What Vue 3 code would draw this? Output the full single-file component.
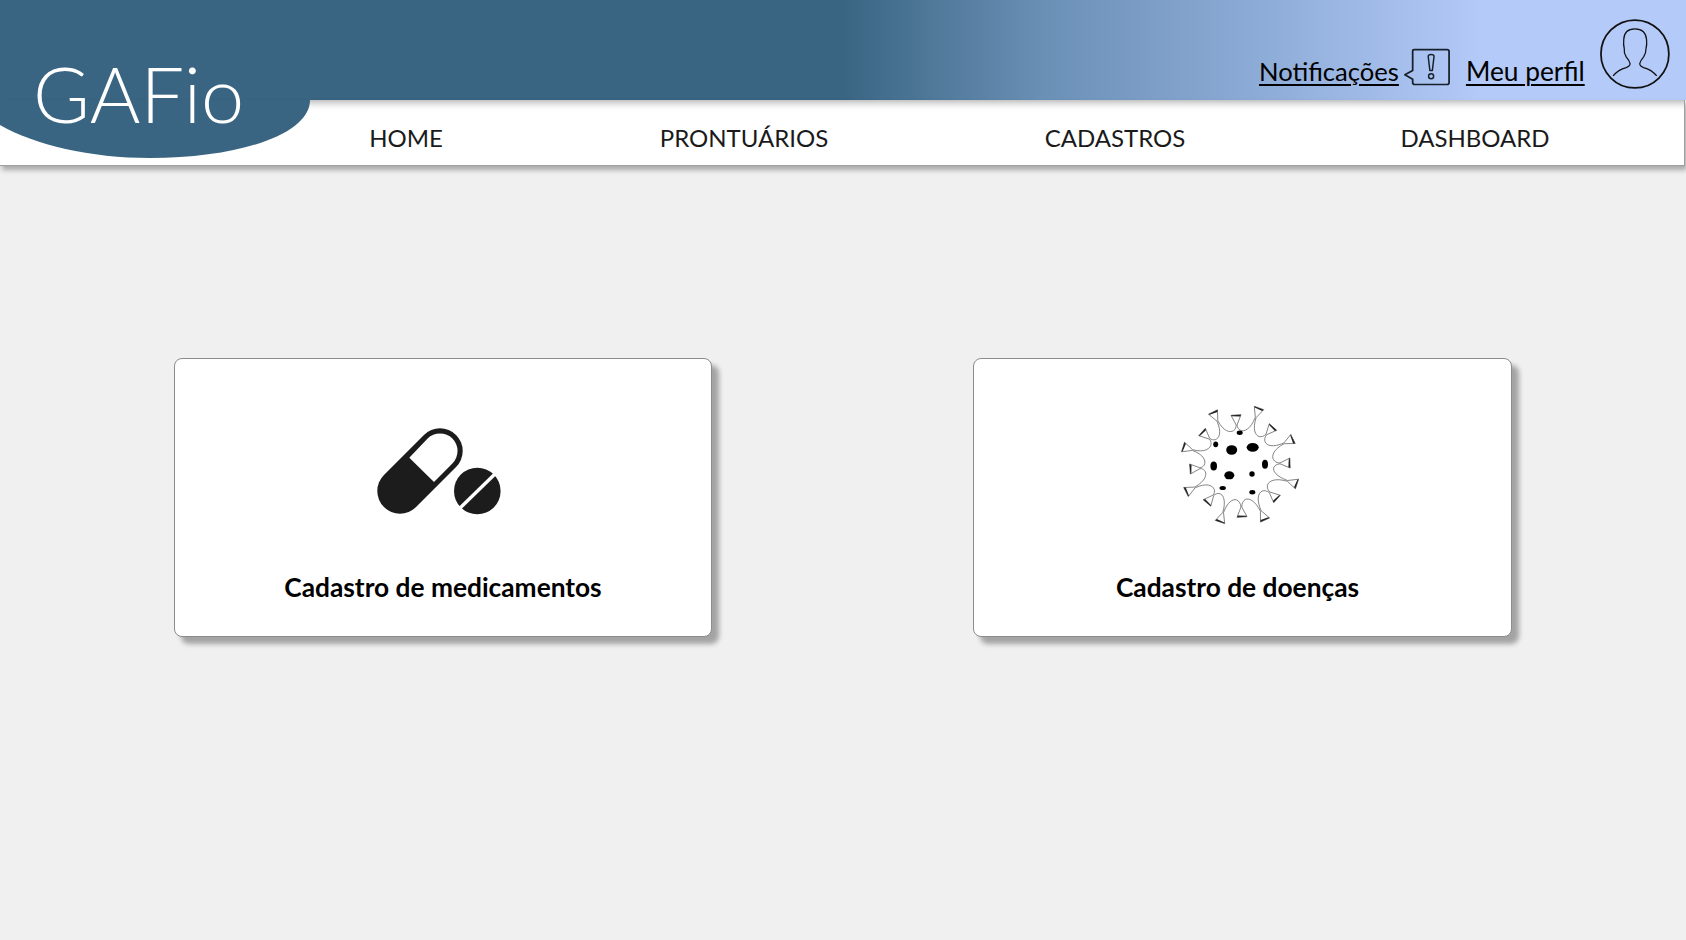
<template>
  <div class="page">
    <header class="header">
      <div class="topbar">
        <a class="toplink">Notificações</a>
        <svg class="alertIcon" width="50" height="42" viewBox="0 0 50 42">
          <path d="M11 3.5 Q11 2 12.5 2 H46.5 Q48.5 2 48.5 4 V36 Q48.5 38 46.5 38 H13 Q11 38 11 36 V32.5 L3 28 L11 23.5 Z" fill="none" stroke="#16202a" stroke-width="1.8" stroke-linejoin="round" />
          <path d="M27 9 Q27 7 30 7 Q33 7 33 9 L31.3 23.5 H28.7 Z" fill="none" stroke="#16202a" stroke-width="1.5" stroke-linejoin="round" />
          <circle cx="30" cy="29.5" r="2.6" fill="none" stroke="#16202a" stroke-width="1.5" />
        </svg>
        <a class="toplink profile">Meu perfil</a>
        <svg class="avatar" width="74" height="74" viewBox="0 0 74 74">
          <circle cx="37" cy="37" r="35" fill="none" stroke="#111" stroke-width="1.8" />
          <path d="M14.5 59.5 Q20 53 28 51 Q32 49.5 32 47 Q31.5 44 28 40 Q25.5 36 26 31 Q25 28 25.5 22 Q26 11 37 11 Q48 11 49 22 Q49.5 28 48.5 31 Q48.5 36 46 40 Q42.5 44 42 47 Q42 49.5 46 51 Q54 53 59.5 59.5" fill="none" stroke="#111" stroke-width="1.3" />
        </svg>
      </div>
      <nav class="nav">
        <a v-for="item in menu" :key="item">{{ item }}</a>
      </nav>
      <div class="logo">
        <svg class="logoShape" width="312" height="60" viewBox="0 0 312 60">
          <path d="M0 0 H310 C310 34 240 58 150 58 C90 58 35 45 0 25 Z" fill="#396582" />
        </svg>
        <span class="logoText">GAFio</span>
      </div>
    </header>

    <main class="cards">
      <section class="card">
        <svg class="cardIcon pillIcon" width="170" height="120" viewBox="0 0 170 120">
          <line x1="50" y1="80" x2="90" y2="40" stroke="#1c1c1c" stroke-width="45.4" stroke-linecap="round" />
          <path d="M59.3 46.7 L77.6 27.6 A17.5 17.5 0 0 1 102.4 52.4 L84 71 Z" fill="#fff" />
          <circle cx="127.3" cy="80" r="23.3" fill="#1c1c1c" />
          <line x1="108" y1="99" x2="147" y2="61" stroke="#fff" stroke-width="3.4" />
        </svg>
        <h2>Cadastro de medicamentos</h2>
      </section>
      <section class="card virusCard">
        <svg class="cardIcon" width="150" height="140" viewBox="0 0 150 140">
          <path :d="virusOutline" fill="none" stroke="#666" stroke-width="0.8" stroke-linejoin="round" />
          <path v-for="(h, i) in virusHeads" :key="i" :d="h" fill="#222" />
          <ellipse v-for="(b, i) in virusDots" :key="'d' + i" :cx="b[0]" :cy="b[1]" :rx="b[2]" :ry="b[3]" fill="#000" />
        </svg>
        <h2>Cadastro de doenças</h2>
      </section>
    </main>
  </div>
</template>

<script setup>
const menu = ['HOME', 'PRONTUÁRIOS', 'CADASTROS', 'DASHBOARD']

// spike tips of the virus, read off the picture
const tips = [
  [48, 17], [71, 20], [94, 13], [108, 32], [128, 44], [125, 68], [132, 89], [112, 104],
  [100, 125], [77, 122], [55, 127], [42, 108], [21, 97], [25, 74], [18, 52], [37, 37]
]
const cx = 74
const cy = 70

const at = (p, r, side) => {
  const dx = p[0] - cx
  const dy = p[1] - cy
  const len = Math.hypot(dx, dy)
  const ux = dx / len
  const uy = dy / len
  return [p[0] - ux * r - uy * side, p[1] - uy * r + ux * side]
}
const pt = (p) => p[0].toFixed(1) + ' ' + p[1].toFixed(1)

// depth of the U between two spikes, from how far out the spike reaches
const reach = (p) => Math.max(Math.hypot(p[0] - cx, p[1] - cy) - 38, 10) + 6

let outline = ''
tips.forEach((tip, i) => {
  const next = tips[(i + 1) % tips.length]
  const neck = at(tip, 10, 0.4)
  const nextNeck = at(next, 10, -0.4)
  if (i === 0) outline += 'M' + pt(at(tip, 10, -0.4))
  outline += ' L' + pt(at(tip, 0, -5)) + ' L' + pt(at(tip, 0, 5)) + ' L' + pt(neck)
  outline += ' C' + pt(at(tip, reach(tip), 1)) + ' ' + pt(at(next, reach(next), -1)) + ' ' + pt(nextNeck)
})
const virusOutline = outline + ' Z'

const virusHeads = tips.map((tip) => {
  return 'M' + pt(at(tip, 0, -5)) + ' L' + pt(at(tip, 0, 5)) + ' L' + pt(at(tip, 1.8, 4)) + ' L' + pt(at(tip, 1, -4.2)) + ' Z'
})

const virusDots = [
  [66.7, 55, 5.5, 4.8], [87.7, 52.3, 6, 4.4], [74.7, 37.7, 3, 2.2], [50.7, 49.3, 2.5, 2.9],
  [48.7, 71, 3.3, 4.5], [64.3, 80.3, 5, 4], [100, 69.3, 3, 4.5], [87, 79, 2.7, 2.7],
  [57.7, 93, 3.2, 2.1], [87.3, 97.3, 3, 2.2]
]
</script>

<style>
html,
body {
  margin: 0;
  background: #f0f0f0;
}
</style>

<style scoped>
.page {
  width: 1686px;
  height: 940px;
  overflow: hidden;
  background: #f0f0f0;
  font-family: Lato, "Liberation Sans", sans-serif;
  color: #000;
}

.header {
  position: relative;
}

.topbar {
  height: 100px;
  box-sizing: border-box;
  padding: 0 15px 0 1259px;
  display: flex;
  align-items: flex-end;
  background: linear-gradient(90deg, #396582 0%, #396582 50%, #6b90b6 62%, #8eacd8 75%, #b4caf9 88%, #b4caf9 100%);
}

.toplink {
  color: #000;
  font-size: 25.6px;
  line-height: 30px;
  text-decoration: underline;
  text-decoration-thickness: 1.5px;
  text-underline-offset: 3px;
  margin-bottom: 14px;
  width: 140px;
  white-space: nowrap;
}

.alertIcon {
  margin: 0 0 11px 3.5px;
}

.toplink.profile {
  margin-left: 15px;
  width: 119px;
  font-size: 26.3px;
}

.avatar {
  margin: 0 0 9px 14.5px;
}

.nav {
  height: 66px;
  box-sizing: border-box;
  padding: 10px 0 0 306px;
  display: grid;
  grid-template-columns: 338px 371px 360px 200px;
  align-items: center;
  background: #fff;
  border-bottom: 1px solid #a0a0a0;
  border-right: 1px solid #a0a0a0;
  margin-right: 1px;
  box-shadow: inset 0 11px 9px -9px #a8a8a8, 2px 4px 5px rgba(0, 0, 0, 0.3);
}

.nav a {
  width: 200px;
  text-align: center;
  font-size: 24px;
  color: #1a1a1a;
}

.logo {
  position: absolute;
  left: 0;
  top: 0;
  width: 312px;
  height: 158px;
}

.logoShape {
  position: absolute;
  left: 0;
  top: 100px;
}

.logoText {
  position: absolute;
  left: 33px;
  top: 45px;
  font-size: 77.4px;
  line-height: 96px;
  font-weight: 300;
  color: #fff;
}

.cards {
  display: flex;
  padding: 192px 0 0 174px;
  gap: 261px;
}

.card {
  width: 538px;
  height: 279px;
  box-sizing: border-box;
  background: #fff;
  border: 1px solid #8c8c8c;
  border-radius: 8px;
  box-shadow: 7px 7px 5px rgba(0, 0, 0, 0.32);
  display: flex;
  flex-direction: column;
  align-items: center;
}

.virusCard {
  width: 539px;
}

.cardIcon {
  margin-top: 36px;
  margin-right: 6px;
  flex: none;
}

.pillIcon {
  margin-top: 52px;
  margin-right: 17px;
}

.card h2 {
  margin: 0;
  font-size: 26.3px;
  line-height: 30px;
  font-weight: 700;
  color: #000;
  position: absolute;
  margin-top: 213px;
}

.virusCard h2 {
  margin-left: -10px;
}
</style>
